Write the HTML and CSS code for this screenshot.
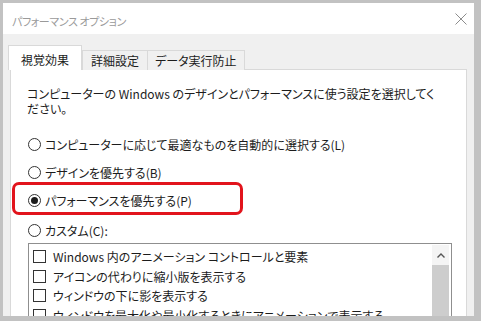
FILE: index.html
```html
<!DOCTYPE html>
<html lang="ja">
<head>
    <meta charset="UTF-8">
    <meta name="viewport" content="width=device-width, initial-scale=1.0">
    <title>パフォーマンス オプション</title>
    <link rel="stylesheet" href="styles.css">
</head>
<body>
    <div class="window">
        <!-- Title bar -->
        <header class="titlebar">
            <span class="title">パフォーマンス オプション</span>
            <svg class="close" viewBox="0 0 12 12" aria-label="閉じる">
                <path d="M0.5 0.5 L11.5 11.5 M11.5 0.5 L0.5 11.5" stroke="#8c8c8c" stroke-width="1" fill="none"/>
            </svg>
        </header>

        <div class="client">
            <!-- Tabs -->
            <div class="tabs" role="tablist">
                <div class="tab active" role="tab">視覚効果</div>
                <div class="tab" role="tab">詳細設定</div>
                <div class="tab" role="tab">データ実行防止</div>
            </div>

            <!-- Visual effects page -->
            <section class="panel" role="tabpanel">
                <p class="intro">コンピューターの Windows のデザインとパフォーマンスに使う設定を選択してください。</p>

                <div class="options">
                    <div class="radio"><span class="dot"></span>コンピューターに応じて最適なものを自動的に選択する(L)</div>
                    <div class="radio"><span class="dot"></span>デザインを優先する(B)</div>
                    <div class="radio"><span class="dot checked"></span>パフォーマンスを優先する(P)</div>
                    <div class="radio custom"><span class="dot"></span>カスタム(C):</div>
                </div>

                <div class="listbox">
                    <ul class="effects">
                        <li><span class="box"></span>Windows 内のアニメーション コントロールと要素</li>
                        <li><span class="box"></span>アイコンの代わりに縮小版を表示する</li>
                        <li><span class="box"></span>ウィンドウの下に影を表示する</li>
                        <li><span class="box"></span>ウィンドウを最大化や最小化するときにアニメーションで表示する</li>
                    </ul>
                    <div class="scrollbar">
                        <div class="scroll-up">
                            <svg viewBox="0 0 8 5"><path d="M0.5 4.5 L4 1 L7.5 4.5" stroke="#555" stroke-width="1.4" fill="none"/></svg>
                        </div>
                        <div class="thumb"></div>
                    </div>
                </div>

                <!-- red annotation -->
                <div class="highlight"></div>
            </section>
        </div>
    </div>
</body>
</html>
```

FILE: styles.css
```css
* {
    box-sizing: border-box;
}

body {
    margin: 0;
    width: 481px;
    height: 321px;
    overflow: hidden;
    background-color: #c2c2c2;
    font-family: "Noto Sans CJK JP", "Noto Sans", sans-serif;
    font-feature-settings: "palt";
    font-size: 12px;
    color: #1c1c1c;
}

.window {
    margin: 3px 7px 0 3px;
    height: 313px;
    overflow: hidden;
    background-color: #f0f0f0;
    display: flex;
    flex-direction: column;
}

.titlebar {
    flex: none;
    height: 31px;
    background-color: #fff;
    display: flex;
    align-items: center;
    justify-content: space-between;
    padding: 4px 7px 0 9px;
}

.title {
    color: #9a9a9a;
    font-size: 11px;
    letter-spacing: -0.4px;
}

.close {
    width: 12px;
    height: 12px;
    margin-top: -3px;
}

.client {
    flex: 1;
    padding: 11px 7px 0 5px;
}

.tabs {
    display: flex;
    align-items: flex-end;
    height: 25px;
    margin-bottom: -1px;
    position: relative;
    z-index: 1;
}

.tab {
    height: 20px;
    padding: 0 7px;
    margin-left: -1px;
    line-height: 20px;
    background-color: #f0f0f0;
    border: 1px solid #d9d9d9;
    border-bottom: none;
}

.tab.active {
    height: 25px;
    margin-left: 0;
    margin-right: 1px;
    padding: 0 12px;
    line-height: 27px;
    background-color: #fff;
}

.tab:nth-child(2) {
    padding: 0 8px;
}

.panel {
    position: relative;
    margin-left: 2px;
    height: 260px;
    overflow: hidden;
    background-color: #fff;
    border: 1px solid #d9d9d9;
    padding: 16px 30px 0 16px;
}

.intro {
    margin: 0;
    line-height: 15px;
}

.options {
    margin-top: 14px;
}

.radio {
    display: flex;
    align-items: center;
    height: 28px;
    padding-left: 1px;
}

.radio.custom {
    margin-top: 3px;
    height: 26px;
}

.dot {
    position: relative;
    width: 13px;
    height: 13px;
    margin-right: 4px;
    border: 1px solid #333;
    border-radius: 50%;
    flex: none;
}

.dot.checked::after {
    content: "";
    position: absolute;
    left: 2px;
    top: 2px;
    width: 7px;
    height: 7px;
    border-radius: 50%;
    background-color: #1c1c1c;
}

.listbox {
    display: flex;
    margin-left: 1px;
    width: 424px;
    height: 90px;
    border: 1px solid #8f8f8f;
}

.effects {
    flex: 1;
    list-style: none;
    margin: 0;
    padding: 3px 0 0 4px;
    overflow: hidden;
}

.effects li {
    display: flex;
    align-items: center;
    height: 19.5px;
    white-space: nowrap;
}

.box {
    width: 13px;
    height: 13px;
    margin-right: 7px;
    border: 1px solid #333;
    flex: none;
}

.scrollbar {
    flex: none;
    width: 17px;
    margin: 1px 2px 0 0;
    display: flex;
    flex-direction: column;
}

.scroll-up {
    height: 20px;
    display: flex;
    align-items: center;
    justify-content: center;
    background-color: #f4f4f4;
}

.scroll-up svg {
    width: 8px;
    height: 5px;
}

.thumb {
    flex: 1;
    background-color: #cdcdcd;
}

.highlight {
    position: absolute;
    left: 1px;
    top: 112px;
    width: 231px;
    height: 33px;
    border: 3px solid #e2141c;
    border-radius: 7px;
}
```
